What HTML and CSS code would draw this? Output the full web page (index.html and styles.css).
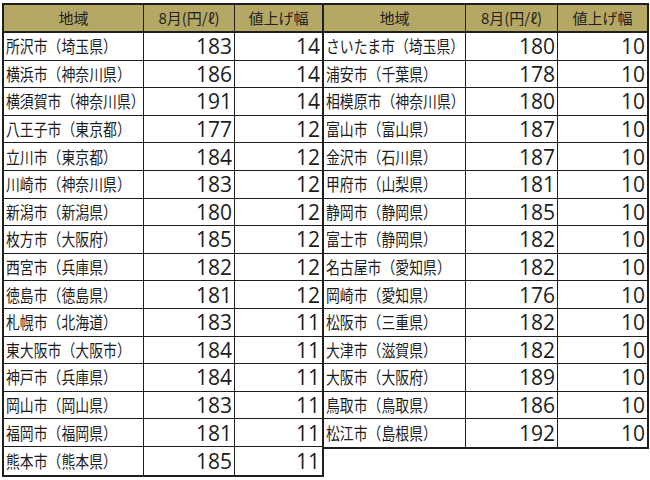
FILE: index.html
```html
<!DOCTYPE html>
<html lang="ja">
<head>
<meta charset="utf-8">
<link rel="stylesheet" href="styles.css">
</head>
<body>
<div class="wrap">
<div class="tbl left">
<div class="th">地域</div><div class="th">8月(円/ℓ)</div><div class="th">値上げ幅</div>
<div class="td"><span class="t">所沢市（埼玉県）</span></div><div class="td n">183</div><div class="td n">14</div>
<div class="td"><span class="t">横浜市（神奈川県）</span></div><div class="td n">186</div><div class="td n">14</div>
<div class="td"><span class="t">横須賀市（神奈川県）</span></div><div class="td n">191</div><div class="td n">14</div>
<div class="td"><span class="t">八王子市（東京都）</span></div><div class="td n">177</div><div class="td n">12</div>
<div class="td"><span class="t">立川市（東京都）</span></div><div class="td n">184</div><div class="td n">12</div>
<div class="td"><span class="t">川崎市（神奈川県）</span></div><div class="td n">183</div><div class="td n">12</div>
<div class="td"><span class="t">新潟市（新潟県）</span></div><div class="td n">180</div><div class="td n">12</div>
<div class="td"><span class="t">枚方市（大阪府）</span></div><div class="td n">185</div><div class="td n">12</div>
<div class="td"><span class="t">西宮市（兵庫県）</span></div><div class="td n">182</div><div class="td n">12</div>
<div class="td"><span class="t">徳島市（徳島県）</span></div><div class="td n">181</div><div class="td n">12</div>
<div class="td"><span class="t">札幌市（北海道）</span></div><div class="td n">183</div><div class="td n">11</div>
<div class="td"><span class="t">東大阪市（大阪市）</span></div><div class="td n">184</div><div class="td n">11</div>
<div class="td"><span class="t">神戸市（兵庫県）</span></div><div class="td n">184</div><div class="td n">11</div>
<div class="td"><span class="t">岡山市（岡山県）</span></div><div class="td n">183</div><div class="td n">11</div>
<div class="td"><span class="t">福岡市（福岡県）</span></div><div class="td n">181</div><div class="td n">11</div>
<div class="td"><span class="t">熊本市（熊本県）</span></div><div class="td n">185</div><div class="td n">11</div>
</div>
<div class="tbl right">
<div class="th">地域</div><div class="th">8月(円/ℓ)</div><div class="th">値上げ幅</div>
<div class="td"><span class="t">さいたま市（埼玉県）</span></div><div class="td n">180</div><div class="td n">10</div>
<div class="td"><span class="t">浦安市（千葉県）</span></div><div class="td n">178</div><div class="td n">10</div>
<div class="td"><span class="t">相模原市（神奈川県）</span></div><div class="td n">180</div><div class="td n">10</div>
<div class="td"><span class="t">富山市（富山県）</span></div><div class="td n">187</div><div class="td n">10</div>
<div class="td"><span class="t">金沢市（石川県）</span></div><div class="td n">187</div><div class="td n">10</div>
<div class="td"><span class="t">甲府市（山梨県）</span></div><div class="td n">181</div><div class="td n">10</div>
<div class="td"><span class="t">静岡市（静岡県）</span></div><div class="td n">185</div><div class="td n">10</div>
<div class="td"><span class="t">富士市（静岡県）</span></div><div class="td n">182</div><div class="td n">10</div>
<div class="td"><span class="t">名古屋市（愛知県）</span></div><div class="td n">182</div><div class="td n">10</div>
<div class="td"><span class="t">岡崎市（愛知県）</span></div><div class="td n">176</div><div class="td n">10</div>
<div class="td"><span class="t">松阪市（三重県）</span></div><div class="td n">182</div><div class="td n">10</div>
<div class="td"><span class="t">大津市（滋賀県）</span></div><div class="td n">182</div><div class="td n">10</div>
<div class="td"><span class="t">大阪市（大阪府）</span></div><div class="td n">189</div><div class="td n">10</div>
<div class="td"><span class="t">鳥取市（鳥取県）</span></div><div class="td n">186</div><div class="td n">10</div>
<div class="td"><span class="t">松江市（島根県）</span></div><div class="td n">192</div><div class="td n">10</div>
</div>
</div>
</body>
</html>
```
FILE: styles.css
```css
html, body {
  margin: 0;
  padding: 0;
  background: #ffffff;
}
body {
  width: 650px;
  height: 480px;
  overflow: hidden;
  font-family: "Noto Sans CJK JP", sans-serif;
  color: #1c1c1c;
}
.wrap {
  display: flex;
  align-items: flex-start;
  padding: 3px 0 0 2px;
}
.tbl {
  display: grid;
  grid-template-rows: 28px;
  grid-auto-rows: 27.6px;
  border: 2px solid #1e1e1e;
}
.left {
  grid-template-columns: 140px 91px 87px;
}
.right {
  grid-template-columns: 142px 92px 89px;
  border-left: none;
}
.th, .td {
  box-sizing: border-box;
  border-right: 1px solid #1e1e1e;
  border-bottom: 1px solid #1e1e1e;
  display: flex;
  align-items: center;
  white-space: nowrap;
}
.th {
  background: #b5a865;
  border-bottom: 2px solid #1e1e1e;
  justify-content: center;
  font-size: 15px;
  color: #222;
  padding-bottom: 1px;
}
.td {
  font-size: 16.5px;
  padding-left: 2px;
}
.t {
  display: inline-block;
  transform: scaleX(0.84);
  transform-origin: left center;
}
.td.n {
  justify-content: flex-end;
  font-family: "Open Sans", sans-serif;
  font-size: 21px;
  padding-left: 0;
  padding-right: 2px;
}
.tbl > :nth-child(3n) {
  border-right: none;
}
.tbl > :nth-last-child(-n+3) {
  border-bottom: none;
}
```
